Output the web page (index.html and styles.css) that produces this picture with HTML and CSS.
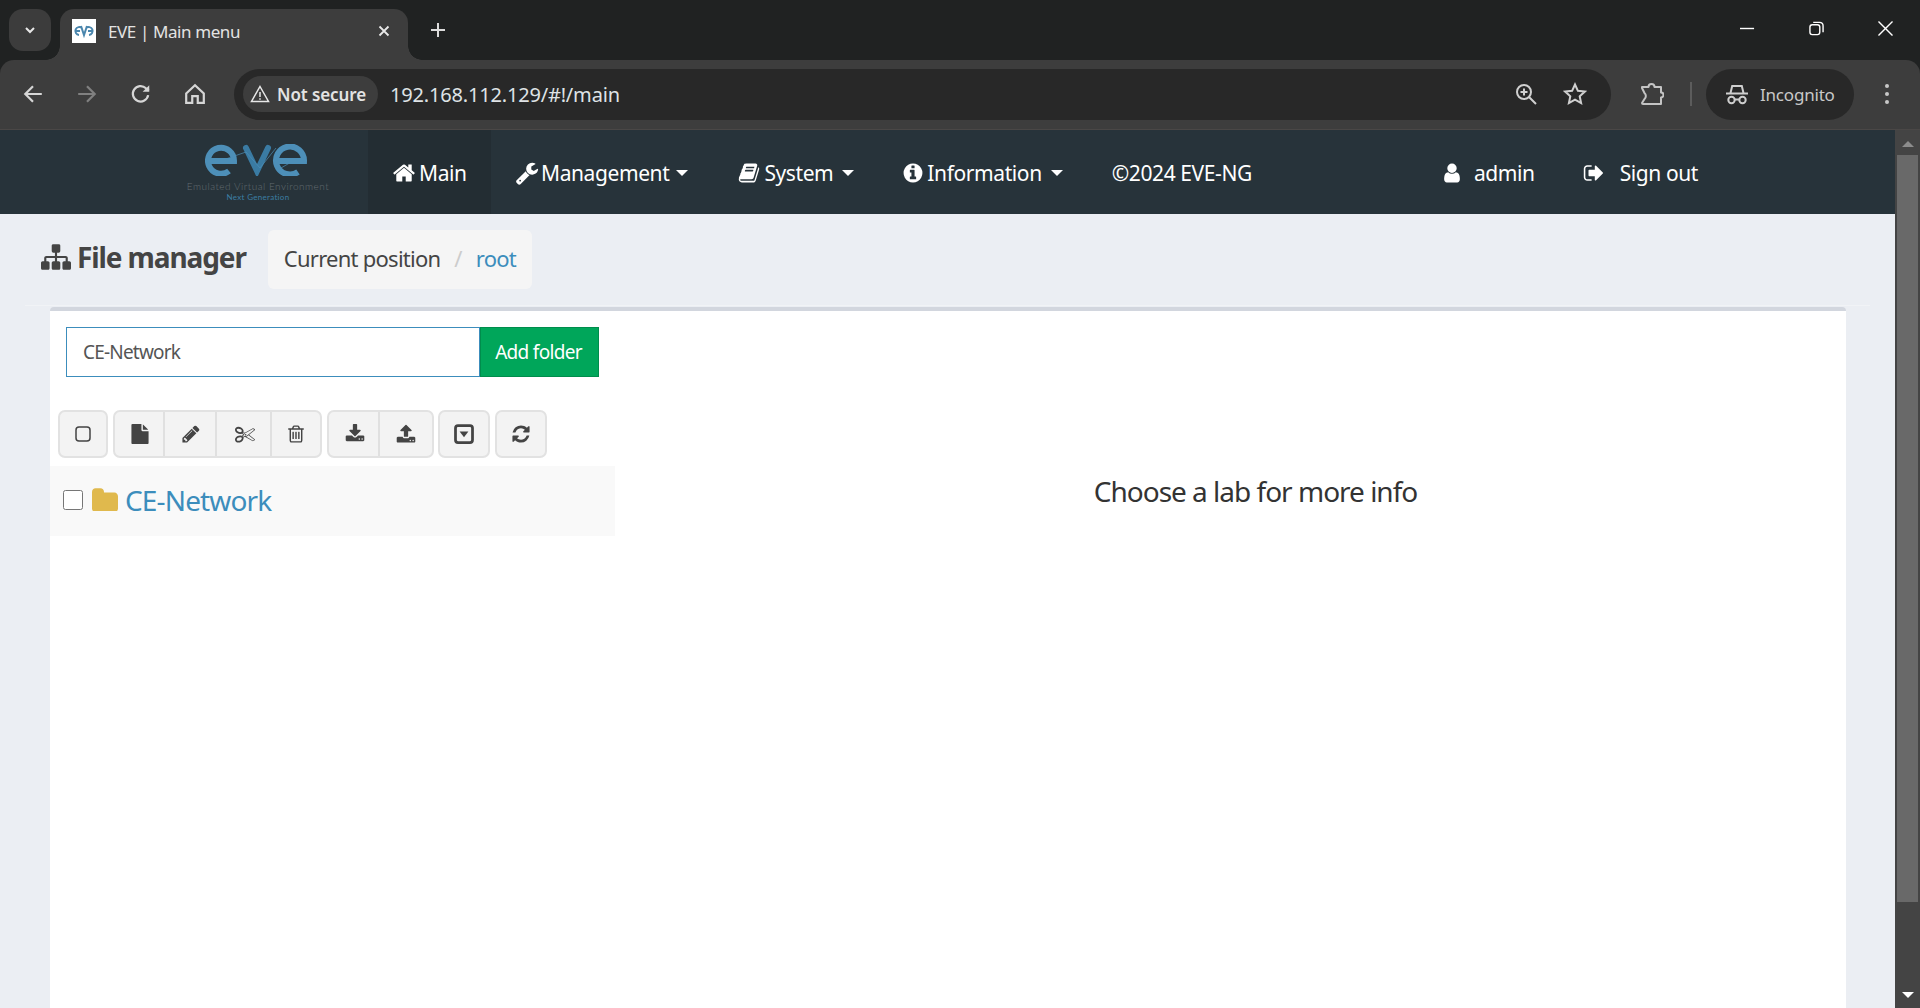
FILE: index.html
```html
<!DOCTYPE html>
<html lang="en">
<head>
<meta charset="utf-8">
<title>EVE | Main menu</title>
<link rel="stylesheet" href="styles.css">
</head>
<body>
<div class="app">
  <div class="tabstrip">
    <div class="tabsearch"><svg class="i12" viewBox="0 0 12 12"><path d="M2 4l4 4 4-4" fill="none" stroke="#e8e8e8" stroke-width="2"/></svg></div>
    <div class="tab">
      <span class="favicon"><svg viewBox="0 0 24 24" width="24" height="24"><path d="M10 9a4 4 0 1 0-3 7M8 12H3M14 9a4 4 0 1 1 3 7M16 12h5M9 7l3 9 3-9" fill="none" stroke="#4a86ad" stroke-width="2"/></svg></span>
      <span class="tabtitle">EVE | Main menu</span>
      <svg class="tabclose" viewBox="0 0 12 12"><path d="M1.500 1.500l9 9M10.500 1.500l-9 9" stroke="#e8e8e8" stroke-width="1.800"/></svg>
    </div>
    <svg class="newtab" viewBox="0 0 16 16"><path d="M8 1v14M1 8h14" stroke="#dcdcdc" stroke-width="2"/></svg>
    <div class="winctl">
      <svg viewBox="0 0 16 16"><path d="M0 8h15" stroke="#fff" stroke-width="1.500"/></svg>
      <svg viewBox="0 0 16 16"><rect x="1" y="4" width="10.500" height="10.500" rx="2.500" fill="none" stroke="#fff" stroke-width="1.500"/><path d="M4.500 1.500h7a3.500 3.500 0 0 1 3.500 3.500v7" fill="none" stroke="#fff" stroke-width="1.500"/></svg>
      <svg viewBox="0 0 16 16"><path d="M.5.5l15 15M15.500.5l-15 15" stroke="#fff" stroke-width="1.500"/></svg>
    </div>
  </div>

  <div class="toolbar">
    <svg class="tb back" viewBox="0 0 20 20"><path d="M18 10H3M10 3l-7 7 7 7" fill="none" stroke="#d6d6d6" stroke-width="2"/></svg>
    <svg class="tb fwd" viewBox="0 0 20 20"><path d="M2 10h15M10 3l7 7-7 7" fill="none" stroke="#808080" stroke-width="2"/></svg>
    <svg class="tb reload" viewBox="0 0 20 20"><path d="M16.500 11a7 7 0 1 1-2-6.200L17 7" fill="none" stroke="#d6d6d6" stroke-width="2"/><path d="M17.500 2v6h-6z" fill="#d6d6d6"/></svg>
    <svg class="tb home" viewBox="0 0 20 20"><path d="M2 9.500L10 2l8 7.500V18h-5.500v-6h-5v6H2z" fill="none" stroke="#d6d6d6" stroke-width="2"/></svg>
    <div class="omnibox">
      <div class="chip">
        <svg class="warn" viewBox="0 0 20 20"><path d="M10 2.500L18.500 17.500h-17zM10 8v5M10 14.200v1.600" fill="none" stroke="#e8e8e8" stroke-width="1.500"/></svg>
        <span class="chiptext">Not secure</span>
      </div>
      <span class="url">192.168.112.129/#!/main</span>
      <svg class="zoomglass" viewBox="0 0 22 22"><circle cx="9" cy="9" r="7" fill="none" stroke="#d0d0d0" stroke-width="2"/><path d="M14 14l7 7M5.500 9h7M9 5.500v7" stroke="#d0d0d0" stroke-width="2"/></svg>
      <svg class="star" viewBox="0 0 24 24"><path d="M12 2.500l2.900 6.300 6.900.8-5.100 4.700 1.400 6.800-6.100-3.400-6.100 3.400 1.400-6.800L2.200 9.600l6.900-.8z" fill="none" stroke="#d0d0d0" stroke-width="2"/></svg>
    </div>
    <svg class="puzzle" viewBox="0 0 24 24"><path d="M2 5h6.500a3 3 0 0 1 6 0H21v5.500a2.500 2.500 0 0 1 0 5V22H3a1 1 0 0 1-1-1l2.500-4a4 4 0 0 0 0-6L2 6z" fill="none" stroke="#c4c4c4" stroke-width="2" stroke-linejoin="round"/></svg>
    <span class="sep"></span>
    <div class="incog">
      <svg class="hat" viewBox="0 0 22 22"><path d="M0 10.500h22M4.500 10l1.700-7h9.600l1.700 7" fill="none" stroke="#cfcfcf" stroke-width="2"/><circle cx="5.500" cy="17" r="3.200" fill="none" stroke="#cfcfcf" stroke-width="2"/><circle cx="16.500" cy="17" r="3.200" fill="none" stroke="#cfcfcf" stroke-width="2"/><path d="M8.700 16.500h4.600" stroke="#cfcfcf" stroke-width="2"/></svg>
      <span class="incogtext">Incognito</span>
    </div>
    <div class="kebab"><i></i><i></i><i></i></div>
  </div>

  <div class="viewport">
    <div class="page">
      <nav class="nav">
        <div class="logo">
          <svg class="logomark" viewBox="0 0 104 32" width="104" height="32">
            <path d="M3 17h26a13 13 0 1 0-5 10" fill="none" stroke="#4d8fb8" stroke-width="6"/>
            <path d="M41 4l11 23 11-23" fill="none" stroke="#3a7ba3" stroke-width="6" stroke-linecap="round"/>
            <path d="M71 17h28a14 14 0 1 0-6 11" fill="none" stroke="#4d8fb8" stroke-width="6"/>
            <path d="M15 17l26-9 14 16 16-20M76 24l12-7" fill="none" stroke="#4d8fb8" stroke-width=".7"/>
          </svg>
          <span class="logoname">Emulated Virtual Environment</span>
          <span class="logogen">Next Generation</span>
        </div>
        <a class="navitem active nav-main">
          <svg class="fa nav-i-home" viewBox="0 0 1792 1792"><path d="M1472 992v480q0 26-19 45t-45 19h-384v-384h-256v384h-384q-26 0-45-19t-19-45v-480q0-1 .5-3t.5-3l575-474 575 474q1 2 1 6zm223-69l-62 74q-8 9-21 11h-3q-13 0-21-7l-692-577-692 577q-12 8-24 7-13-2-21-11l-62-74q-8-10-7-23.500t11-21.500l719-599q32-26 76-26t76 26l244 204v-195q0-14 9-23t23-9h192q14 0 23 9t9 23v408l219 182q10 8 11 21.500t-7 23.500z"/></svg>
          <span>Main</span>
        </a>
        <a class="navitem nav-mgmt">
          <svg class="fa" viewBox="0 0 1792 1792"><path d="M448 1472q0-26-19-45t-45-19-45 19-19 45 19 45 45 19 45-19 19-45zm644-420l-682 682q-37 37-90 37-52 0-91-37l-106-108q-38-36-38-90 0-53 38-91l681-681q39 98 114.500 173.500t173.500 114.500zm634-435q0 39-23 106-47 134-164.500 217.500t-258.500 83.500q-185 0-316.500-131.500t-131.500-316.500 131.500-316.500 316.500-131.500q58 0 121.500 16.500t107.500 46.500q16 11 16 28t-16 28l-293 169v224l193 107q5-3 79-48.500t135.500-81 70.500-35.500q15 0 23.500 10t8.500 25z"/></svg>
          <span>Management</span><i class="caret"></i>
        </a>
        <a class="navitem nav-sys">
          <svg class="fa" viewBox="0 0 1792 1792"><path d="M1703 478q40 57 18 129l-275 906q-19 64-76.500 107.500t-122.500 43.500h-923q-77 0-148.500-53.500t-99.500-131.500q-24-67-2-127 0-4 3-27t4-37q1-8-3-21.500t-3-19.500q2-11 8-21t16.500-23.500 16.500-23.500q23-38 45-91.500t30-91.500q3-10 .5-30t-.5-28q3-11 17-28t17-23q21-36 42-92t25-90q1-9-2.500-32t.5-28q4-13 22-30.500t22-22.500q19-26 42.500-84.500t27.500-96.500q1-8-3-25.500t-2-26.500q2-8 9-18t18-23 17-21q8-12 16.500-30.500t15-35 16-36 19.500-32 26.500-23.500 36-11.500 47.500 5.500l-1 3q38-9 51-9h761q74 0 114 56t18 130l-274 906q-36 119-71.500 153.500t-128.500 34.500h-869q-27 0-38 15-11 16-1 43 24 70 144 70h923q29 0 56-15.500t35-41.500l300-987q7-22 5-57 38 15 59 43zm-1064 2q-4 13 2 22.500t20 9.500h608q13 0 25.500-9.500t16.500-22.500l21-64q4-13-2-22.500t-20-9.500h-608q-13 0-25.500 9.500t-16.500 22.500zm-83 256q-4 13 2 22.500t20 9.500h608q13 0 25.500-9.500t16.500-22.500l21-64q4-13-2-22.500t-20-9.500h-608q-13 0-25.500 9.500t-16.500 22.500z"/></svg>
          <span>System</span><i class="caret"></i>
        </a>
        <a class="navitem nav-info">
          <svg class="fa" viewBox="0 0 1792 1792"><path d="M1152 1376v-160q0-14-9-23t-23-9h-96v-512q0-14-9-23t-23-9h-320q-14 0-23 9t-9 23v160q0 14 9 23t23 9h96v320h-96q-14 0-23 9t-9 23v160q0 14 9 23t23 9h448q14 0 23-9t9-23zm-128-896v-160q0-14-9-23t-23-9h-192q-14 0-23 9t-9 23v160q0 14 9 23t23 9h192q14 0 23-9t9-23zm640 416q0 209-103 385.500t-279.500 279.500-385.500 103-385.500-103-279.500-279.500-103-385.500 103-385.500 279.500-279.500 385.500-103 385.500 103 279.500 279.500 103 385.500z"/></svg>
          <span>Information</span><i class="caret"></i>
        </a>
        <span class="navitem nav-copy">©2024 EVE-NG</span>
        <a class="navitem nav-user">
          <svg class="fa" viewBox="0 0 1792 1792"><path d="M1536 1399q0 109-62.500 187t-150.500 78h-854q-88 0-150.500-78t-62.500-187q0-85 8.500-160.500t31.500-152 58.500-131 94-89 134.500-34.500q131 128 313 128t313-128q76 0 134.500 34.500t94 89 58.500 131 31.500 152 8.500 160.500zm-256-887q0 159-112.500 271.500t-271.500 112.500-271.500-112.500-112.500-271.500 112.500-271.500 271.500-112.500 271.500 112.500 112.500 271.500z"/></svg>
          <span>admin</span>
        </a>
        <a class="navitem nav-out">
          <svg class="fa" viewBox="0 0 1792 1792"><path d="M704 1440q0 4 1 20t.5 26.500-3 23.500-10 19.500-20.500 6.500h-320q-119 0-203.500-84.500t-84.500-203.500v-704q0-119 84.500-203.500t203.500-84.500h320q13 0 22.500 9.500t9.500 22.500q0 4 1 20t.5 26.500-3 23.500-10 19.500-20.500 6.500h-320q-66 0-113 47t-47 113v704q0 66 47 113t113 47h312l11.500 1 11.500 3 8 5.500 7 9 2 13.500zm928-544q0 26-19 45l-544 544q-19 19-45 19t-45-19-19-45v-288h-448q-26 0-45-19t-19-45v-384q0-26 19-45t45-19h448v-288q0-26 19-45t45-19 45 19l544 544q19 19 19 45z"/></svg>
          <span>Sign out</span>
        </a>
      </nav>

      <header class="pagehead">
        <h1 class="title">
          <svg class="fa sitemap" viewBox="0 0 1792 1792"><path d="M1792 1248v320q0 40-28 68t-68 28h-320q-40 0-68-28t-28-68v-320q0-40 28-68t68-28h96v-192h-512v192h96q40 0 68 28t28 68v320q0 40-28 68t-68 28h-320q-40 0-68-28t-28-68v-320q0-40 28-68t68-28h96v-192h-512v192h96q40 0 68 28t28 68v320q0 40-28 68t-68 28h-320q-40 0-68-28t-28-68v-320q0-40 28-68t68-28h96v-192q0-52 38-90t90-38h512v-192h-96q-40 0-68-28t-28-68v-320q0-40 28-68t68-28h320q40 0 68 28t28 68v320q0 40-28 68t-68 28h-96v192h512q52 0 90 38t38 90v192h96q40 0 68 28t28 68z"/></svg>
          <span>File manager</span>
        </h1>
        <div class="crumb"><span>Current position</span><span class="slash">/</span><a class="rootlink">root</a></div>
      </header>

      <section class="panel">
        <div class="left">
          <form class="addfolder">
            <input class="foldername" type="text" value="CE-Network">
            <button class="addbtn" type="button">Add folder</button>
          </form>
          <div class="tools">
            <div class="grp"><span class="tbtn w46"><svg class="sq" viewBox="0 0 16 16"><rect x="1" y="1" width="14" height="14" rx="3" fill="none" stroke="#444" stroke-width="1.500"/></svg></span></div>
            <div class="grp">
              <span class="tbtn w50"><svg class="fa" viewBox="0 0 1792 1792"><path d="M1152 512v-472q22 14 36 28l408 408q14 14 28 36h-472zm-128 32q0 40 28 68t68 28h544v1056q0 40-28 68t-68 28h-1344q-40 0-68-28t-28-68v-1600q0-40 28-68t68-28h800v544z"/></svg></span>
              <span class="tbtn w52"><svg class="fa" viewBox="0 0 1792 1792"><path d="M491 1536l91-91-235-235-91 91v107h128v128h107zm523-928q0-22-22-22-10 0-17 7l-542 542q-7 7-7 17 0 22 22 22 10 0 17-7l542-542q7-7 7-17zm-54-192l416 416-832 832h-416v-416zm683 96q0 53-37 90l-166 166-416-416 166-165q36-38 90-38 53 0 91 38l235 234q37 39 37 91z"/></svg></span>
              <span class="tbtn w55"><svg class="fa" viewBox="0 0 1792 1792"><path d="M960 896q26 0 45 19t19 45-19 45-45 19-45-19-19-45 19-45 45-19zm300 64l507 398q28 20 25 56-5 35-35 51l-128 64q-13 7-29 7-17 0-31-8l-690-387-110 66q-8 4-12 5 14 49 10 97-7 77-56 147.500t-132 123.500q-132 84-277 84-136 0-222-78-90-84-79-207 7-76 56-147t131-124q132-84 278-84 83 0 151 31 9-13 22-22l122-73-122-73q-13-9-22-22-68 31-151 31-146 0-278-84-82-53-131-124t-56-147q-5-59 15.500-113t63.500-93q85-79 222-79 145 0 277 84 83 52 132 123t56 148q4 48-10 97 4 1 12 5l110 66 690-387q14-8 31-8 16 0 29 7l128 65q30 15 35 51 3 36-25 56zm-681-260q46-42 21-108t-106-117q-92-59-192-59-74 0-113 36-46 42-21 108t106 117q92 59 192 59 74 0 113-36zm-85 745q81-51 106-117t-21-108q-39-36-113-36-100 0-192 59-81 51-106 117t21 108q39 36 113 36 100 0 192-59zm178-613l96 58v-11q0-36 33-56l14-8-79-47-26 26q-3 3-10 11t-12 12q-2 2-4 3.500t-3 2.500zm224 224l96 32 736-576-128-64-768 431v113l-160 96 9 8q2 2 7 6 4 4 11 12t11 12l26 26zm704 416l128-64-520-408-177 138q-2 3-13 7z"/></svg></span>
              <span class="tbtn w48"><svg class="fa" viewBox="0 0 1792 1792"><path d="M704 736v576q0 14-9 23t-23 9h-64q-14 0-23-9t-9-23v-576q0-14 9-23t23-9h64q14 0 23 9t9 23zm256 0v576q0 14-9 23t-23 9h-64q-14 0-23-9t-9-23v-576q0-14 9-23t23-9h64q14 0 23 9t9 23zm256 0v576q0 14-9 23t-23 9h-64q-14 0-23-9t-9-23v-576q0-14 9-23t23-9h64q14 0 23 9t9 23zm128 724v-948h-896v948q0 22 7 40.500t14.500 27 10.500 8.500h832q3 0 10.500-8.500t14.500-27 7-40.500zm-672-1076h448l-48-117q-7-9-17-11h-317q-10 2-17 11zm928 32v64q0 14-9 23t-23 9h-96v948q0 83-47 143.500t-113 60.500h-832q-66 0-113-58.500t-47-141.500v-952h-96q-14 0-23-9t-9-23v-64q0-14 9-23t23-9h309l70-167q15-37 54-63t79-26h320q40 0 79 26t54 63l70 167h309q14 0 23 9t9 23z"/></svg></span>
            </div>
            <div class="grp">
              <span class="tbtn w51"><svg class="fa" viewBox="0 0 1792 1792"><path d="M1344 1344q0-26-19-45t-45-19-45 19-19 45 19 45 45 19 45-19 19-45zm256 0q0-26-19-45t-45-19-45 19-19 45 19 45 45 19 45-19 19-45zm128-224v320q0 40-28 68t-68 28h-1472q-40 0-68-28t-28-68v-320q0-40 28-68t68-28h465l135 136q58 56 136 56t136-56l136-136h464q40 0 68 28t28 68zm-325-569q17 41-14 70l-448 448q-18 19-45 19t-45-19l-448-448q-31-29-14-70 17-39 59-39h256v-448q0-26 19-45t45-19h256q26 0 45 19t19 45v448h256q42 0 59 39z"/></svg></span>
              <span class="tbtn w52"><svg class="fa" viewBox="0 0 1792 1792"><path d="M1344 1472q0-26-19-45t-45-19-45 19-19 45 19 45 45 19 45-19 19-45zm256 0q0-26-19-45t-45-19-45 19-19 45 19 45 45 19 45-19 19-45zm128-224v320q0 40-28 68t-68 28h-1472q-40 0-68-28t-28-68v-320q0-40 28-68t68-28h427q21 56 70.500 92t110.500 36h256q61 0 110.500-36t70.500-92h427q40 0 68 28t28 68zm-325-648q-17 40-59 40h-256v448q0 26-19 45t-45 19h-256q-26 0-45-19t-19-45v-448h-256q-42 0-59-40-17-39 14-69l448-448q18-19 45-19t45 19l448 448q31 30 14 69z"/></svg></span>
            </div>
            <div class="grp tight"><span class="tbtn w48"><svg class="fa" viewBox="0 0 16 16"><rect x="1.200" y="1.200" width="13.600" height="13.600" rx="2" fill="none" stroke="#444" stroke-width="2.200"/><path d="M4.500 6h7L8 10.500z" fill="#444"/></svg></span></div>
            <div class="grp"><span class="tbtn w48"><svg class="fa" viewBox="0 0 1792 1792"><path d="M1639 1056q0 5-1 7-64 268-268 434.500t-478 166.500q-146 0-282.500-55t-243.500-157l-129 129q-19 19-45 19t-45-19-19-45v-448q0-26 19-45t45-19h448q26 0 45 19t19 45-19 45l-137 137q71 66 161 102t187 36q134 0 250-65t186-179q11-17 53-117 8-23 30-23h192q13 0 22.500 9.500t9.500 22.500zm25-800v448q0 26-19 45t-45 19h-448q-26 0-45-19t-19-45 19-45l138-138q-148-137-349-137-134 0-250 65t-186 179q-11 17-53 117-8 23-30 23h-199q-13 0-22.500-9.500t-9.500-22.500v-7q65-268 270-434.500t480-166.500q146 0 284 55.500t245 156.500l130-129q19-19 45-19t45 19 19 45z"/></svg></span></div>
          </div>
          <div class="row">
            <input class="rowcheck" type="checkbox">
            <svg class="folder" viewBox="0 60 1792 1400" preserveAspectRatio="none"><path d="M1728 608v704q0 92-66 158t-158 66h-1216q-92 0-158-66t-66-158v-960q0-92 66-158t158-66h320q92 0 158 66t66 158v32h672q92 0 158 66t66 158z"/></svg>
            <a class="rowlink">CE-Network</a>
          </div>
        </div>
        <div class="right"><p class="choose">Choose a lab for more info</p></div>
      </section>
    </div>
    <aside class="scrollbar">
      <i class="arrow up"></i>
      <div class="track"><div class="thumb"></div></div>
      <i class="arrow down"></i>
    </aside>
  </div>
</div>
</body>
</html>
```
FILE: styles.css
```css
* { box-sizing: border-box; }
html, body { margin: 0; height: 100%; overflow: hidden; }
body { font-family: "Noto Sans", "Open Sans", sans-serif; background: #202222; color: #333; }
a { text-decoration: none; }
svg { display: block; flex: none; }

.app { display: flex; flex-direction: column; height: 1008px; }

/* browser frame */
.tabstrip { height: 60px; flex: none; background: #202222; display: flex; align-items: flex-start; padding: 9px 0 0 9px; }
.tabsearch { width: 42px; height: 42px; border-radius: 14px; background: #3c3c3c; display: flex; align-items: center; justify-content: center; }
.i12 { width: 12px; height: 12px; }
.tab { position: relative; margin-left: 9px; width: 348px; height: 51px; background: #3d3d3d; border-radius: 14px 14px 0 0; display: flex; align-items: center; padding: 0 18px 8px 12px; }
.tab::before, .tab::after { content: ""; position: absolute; bottom: 0; width: 14px; height: 14px; }
.tab::before { left: -14px; background: radial-gradient(circle at 0 0, transparent 13.500px, #3d3d3d 14px); }
.tab::after { right: -14px; background: radial-gradient(circle at 100% 0, transparent 13.500px, #3d3d3d 14px); }
.favicon { width: 24px; height: 24px; background: #fff; flex: none; }
.tabtitle { margin: 2px 0 0 12px; font-size: 17px; color: #e3e3e3; letter-spacing: -.4px; white-space: nowrap; flex: 1; }
.tabclose { width: 12px; height: 12px; }
.newtab { width: 16px; height: 16px; margin: 13px 0 0 22px; }
.winctl { margin-left: auto; display: flex; gap: 54px; padding: 12px 27px 0 0; }
.winctl svg { width: 15px; height: 15px; }

.toolbar { height: 70px; flex: none; background: #3d3d3d; border-bottom: 1px solid #4a4746; border-radius: 14px 14px 0 0; display: flex; align-items: center; padding-bottom: 1px; }
.tb { width: 22px; height: 22px; }
.back { margin-left: 22px; }
.fwd { margin-left: 32px; }
.reload { margin-left: 32px; }
.home { margin-left: 32px; }
.omnibox { margin-left: 28px; width: 1377px; height: 51px; background: #282828; border-radius: 26px; display: flex; align-items: center; padding: 0 24px 0 9px; }
.chip { height: 36px; width: 135px; background: #3d3d3d; border-radius: 18px; display: flex; align-items: center; padding-left: 7px; }
.warn { width: 20px; height: 20px; }
.chiptext { margin-left: 7px; font-size: 17px; font-weight: 600; color: #e3e3e3; letter-spacing: -.1px; white-space: nowrap; }
.url { margin-left: 12px; font-size: 20px; color: #dfe3e6; letter-spacing: -.18px; white-space: nowrap; flex: 1; }
.zoomglass { width: 22px; height: 22px; }
.star { width: 24px; height: 24px; margin-left: 26px; }
.puzzle { width: 24px; height: 24px; margin-left: 29px; }
.sep { width: 2px; height: 24px; background: #5c5c5c; margin-left: 26px; }
.incog { margin-left: 14px; width: 148px; height: 51px; border-radius: 26px; background: #282828; display: flex; align-items: center; padding-left: 20px; }
.hat { width: 22px; height: 22px; }
.incogtext { margin-left: 12px; font-size: 17px; color: #c8c8c8; letter-spacing: -.2px; }
.kebab { margin-left: 31px; display: flex; flex-direction: column; gap: 4px; }
.kebab i { width: 4px; height: 4px; border-radius: 50%; background: #c8c8c8; display: block; }

.viewport { flex: 1; display: flex; min-height: 0; }
.page { flex: 1; min-width: 0; overflow: hidden; display: flex; flex-direction: column; background: #ebeef3; }

/* scrollbar */
.scrollbar { width: 25px; flex: none; background: #444; display: flex; flex-direction: column; align-items: center; padding-top: 11px; }
.arrow { width: 0; height: 0; display: block; border-left: 6px solid transparent; border-right: 6px solid transparent; flex: none; }
.arrow.up { border-bottom: 6px solid #8c8c8c; }
.arrow.down { border-top: 6px solid #fff; margin-bottom: 10px; }
.track { flex: 1; width: 21px; padding-top: 8px; }
.thumb { height: 747px; background: #696969; }

/* nav */
.nav { height: 84px; flex: none; background: #27333a; display: flex; align-items: stretch; color: #fff; font-size: 21px; letter-spacing: -.4px; }
.logo { width: 368px; padding: 14px 38px 0 186px; display: flex; flex-direction: column; align-items: center; letter-spacing: 0; }
.logomark { margin-left: -2px; width: 104px; height: 32px; }
.logoname { width: 144px; margin-top: 5px; font-family: "Lato", sans-serif; font-size: 10px; font-weight: 300; line-height: 11px; color: #626b70; white-space: nowrap; letter-spacing: .5px; text-align: center; }
.logogen { margin-top: 1px; font-family: "Lato", sans-serif; font-size: 8px; line-height: 9px; color: #3c7ea3; letter-spacing: .3px; white-space: nowrap; }
.navitem { display: flex; align-items: center; color: #fff; white-space: nowrap; padding-top: 1px; }
.fa { width: 22px; height: 22px; fill: currentColor; }
.navitem .fa { margin-right: 4px; }
.active { background: #232d33; }
.nav-main { width: 123px; padding-left: 24px; }
.nav-mgmt { margin-left: 24px; }
.nav-mgmt .fa { width: 24px; height: 24px; margin-right: 2px; }
.nav-main .fa { width: 24px; height: 24px; margin-right: 3px; }
.nav-sys { margin-left: 50px; }
.nav-info { margin-left: 48px; }
.nav-info .fa { margin-right: 3px; }
.nav-copy { margin-left: 49px; }
.nav-user { margin-left: 189px; }
.nav-user .fa { margin-right: 11px; }
.nav-out { margin-left: 48px; }
.nav-out .fa { margin-right: 15px; }
.caret { width: 0; height: 0; margin-left: 9px; border-left: 6px solid transparent; border-right: 6px solid transparent; border-top: 6px solid #fff; }
.nav-mgmt .caret { margin-left: 7px; }

/* page head */
.pagehead { height: 93px; flex: none; display: flex; align-items: flex-start; padding: 16px 0 0 41px; position: relative; }
.pagehead::after { content: ""; position: absolute; left: 25px; right: 25px; bottom: 1px; height: 1px; background: #f1f3f6; }
.title { margin: 8px 0 0; display: flex; align-items: center; font-size: 28px; font-weight: 700; color: #444; letter-spacing: -1.1px; line-height: 38px; }
.sitemap { width: 30px; height: 30px; margin-right: 6px; }
.crumb { margin-left: 22px; width: 264px; height: 59px; background: #f5f5f5; border-radius: 6px; display: flex; align-items: center; padding: 0 0 3px 16px; font-size: 22px; letter-spacing: -.75px; color: #444; }
.slash { color: #ccc; margin: 0 14px; }
.rootlink { color: #3c8dbc; }

/* panel */
.panel { flex: 1; margin: 0 49px 0 50px; background: #fff; border-top: 4px solid #d2d6de; border-radius: 4px 4px 0 0; display: flex; min-height: 0; }
.left { width: 565px; flex: none; display: flex; flex-direction: column; }
.addfolder { display: flex; margin: 16px 0 0 16px; height: 50px; }
.foldername { width: 414px; height: 50px; border: 1px solid #3c8dbc; padding: 0 16px; font: inherit; font-size: 19px; letter-spacing: -.8px; color: #555; outline: 0; background: #fff; }
.addbtn { width: 119px; height: 50px; border: 1px solid #008d4c; background: #00a65a; color: #fff; font: inherit; font-size: 19px; letter-spacing: -.7px; padding: 0 2px 0 0; }
.tools { display: flex; gap: 5px; margin: 33px 0 0 8px; height: 48px; }
.grp { display: flex; border: 2px solid #e2e2e2; border-radius: 7px; background: #f3f3f3; }
.tight { margin-left: -1px; }
.tbtn { height: 44px; display: flex; align-items: center; justify-content: center; color: #444; box-shadow: -2px 0 0 #e0e0e0; }
.tbtn:first-child { box-shadow: none; }
.w46 { width: 46px; }
.w48 { width: 48px; }
.w50 { width: 50px; }
.w51 { width: 51px; }
.w52 { width: 52px; }
.w55 { width: 55px; }
.sq { width: 16px; height: 16px; }
.tbtn .fa { width: 20px; height: 20px; color: #444; margin-top: -1px; }
.row { margin-top: 8px; height: 70px; background: #f9f9f9; display: flex; align-items: center; padding: 0 0 2px 13px; }
.rowcheck { width: 20px; height: 20px; margin: 0; flex: none; }
.folder { width: 28px; height: 24px; margin-left: 8px; margin-top: -3px; fill: #e0b94d; }
.rowlink { margin-left: 6px; font-size: 28px; letter-spacing: -.85px; color: #3c8dbc; }
.right { flex: 1; display: flex; justify-content: center; padding: 160px 0 0 50px; }
.choose { margin: 0; height: 40px; font-size: 28px; letter-spacing: -1px; color: #333; line-height: 40px; }
```
